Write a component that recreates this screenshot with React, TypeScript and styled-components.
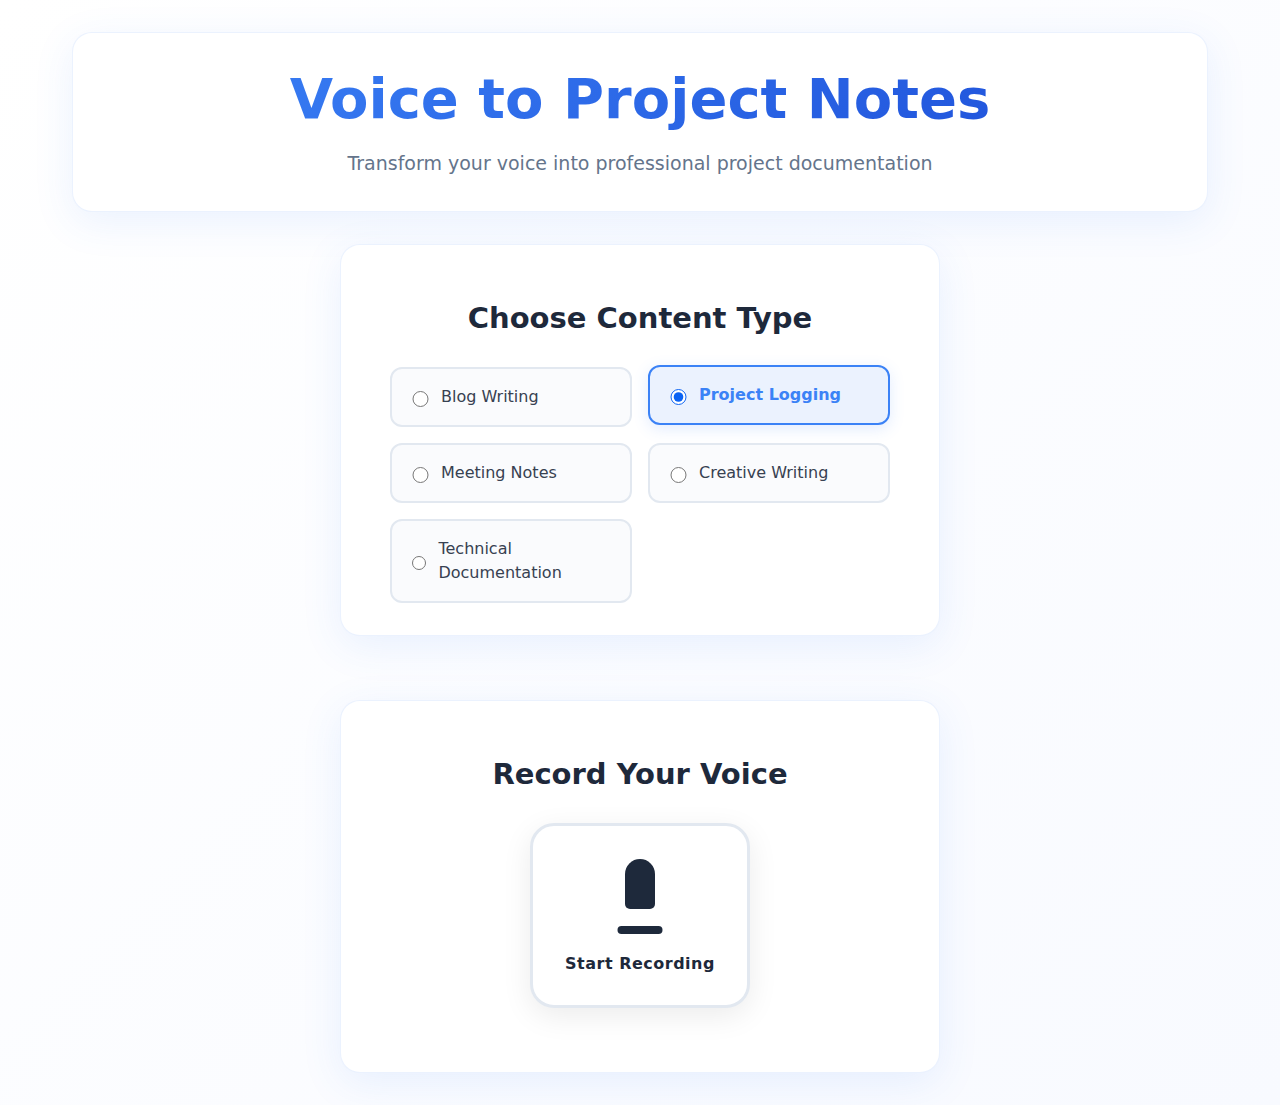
import React, { useState } from 'react';
import styled, { createGlobalStyle } from 'styled-components';

const GlobalStyle = createGlobalStyle`
  *, *::before, *::after { box-sizing: border-box; }
  html { min-height: 100%; }
  body {
    margin: 0;
    min-height: 100vh;
    font-family: "DejaVu Sans", sans-serif;
    font-size: 16px;
    line-height: 24px;
    color: #1e293b;
    background: linear-gradient(135deg, #ffffff 0%, #f8faff 100%);
  }
`;

const Page = styled.div`
  max-width: 1200px;
  margin: 0 auto;
  padding: 32px;
`;

const Card = styled.section`
  background: #ffffff;
  border: 1px solid rgba(59, 130, 246, 0.1);
  border-radius: 20px;
  box-shadow: 0 10px 40px rgba(59, 130, 246, 0.1);
`;

const Header = styled(Card).attrs({ as: 'header' })`
  padding: 32px;
  margin-bottom: 32px;
  text-align: center;
`;

const Title = styled.h1`
  margin: 0 0 16px;
  font-size: 56px;
  line-height: 67px;
  font-weight: 700;
  background: linear-gradient(135deg, #3b82f6 0%, #1d4ed8 100%);
  background-clip: text;
  -webkit-background-clip: text;
  color: transparent;
`;

const Subtitle = styled.p`
  margin: 0;
  font-size: 19px;
  line-height: 31px;
  color: #64748b;
`;

const Main = styled.main`
  display: flex;
  flex-direction: column;
  align-items: center;
  gap: 64px;
`;

const Panel = styled(Card)`
  width: 100%;
  max-width: 600px;
  padding: 48px 48px 32px;
`;

const RecordPanel = styled(Panel)`
  padding-bottom: 64px;
  display: flex;
  flex-direction: column;
  align-items: center;
`;

const PanelTitle = styled.h2`
  margin: 0 0 24px;
  font-size: 29px;
  line-height: 50px;
  font-weight: 600;
  text-align: center;
`;

const Options = styled.div`
  display: grid;
  grid-template-columns: repeat(auto-fit, minmax(200px, 1fr));
  gap: 16px;
  max-width: 500px;
  margin: 0 auto;
`;

const Option = styled.label<{ $selected: boolean }>`
  display: flex;
  align-items: center;
  padding: 16px 20px;
  border: 2px solid ${p => (p.$selected ? '#3b82f6' : '#e2e8f0')};
  border-radius: 12px;
  background: ${p => (p.$selected ? '#ebf2fe' : '#fafbfd')};
  color: ${p => (p.$selected ? '#3b82f6' : '#374151')};
  font-weight: ${p => (p.$selected ? 600 : 400)};
  box-shadow: ${p => (p.$selected ? '0 4px 15px rgba(59, 130, 246, 0.15)' : 'none')};
  transform: ${p => (p.$selected ? 'translateY(-2px)' : 'none')};
  cursor: pointer;
`;

const Radio = styled.input`
  width: 17px;
  height: 16px;
  margin: 4px 12px 0 0;
  accent-color: #0b63f3;
`;

const RecordButton = styled.button`
  display: flex;
  flex-direction: column;
  align-items: center;
  gap: 20px;
  min-width: 220px;
  padding: 32px;
  border: 3px solid #e2e8f0;
  border-radius: 24px;
  background: #ffffff;
  box-shadow: 0 8px 30px rgba(0, 0, 0, 0.08);
  color: #1e293b;
  font: inherit;
  font-weight: 600;
  line-height: 19px;
  letter-spacing: 0.5px;
  cursor: pointer;
`;

const options = ['Blog Writing', 'Project Logging', 'Meeting Notes', 'Creative Writing', 'Technical Documentation'];

export default function App() {
  const [selected, setSelected] = useState('Project Logging');
  return (
    <>
      <GlobalStyle />
      <Page>
        <Header>
          <Title>Voice to Project Notes</Title>
          <Subtitle>Transform your voice into professional project documentation</Subtitle>
        </Header>
        <Main>
          <Panel>
            <PanelTitle>Choose Content Type</PanelTitle>
            <Options role="radiogroup" aria-label="Choose Content Type">
              {options.map(name => (
                <Option key={name} $selected={name === selected}>
                  <Radio
                    type="radio"
                    name="content-type"
                    value={name}
                    checked={name === selected}
                    onChange={() => setSelected(name)}
                  />
                  <span>{name}</span>
                </Option>
              ))}
            </Options>
          </Panel>
          <RecordPanel>
            <PanelTitle>Record Your Voice</PanelTitle>
            <RecordButton type="button">
              <svg width="46" height="76" viewBox="0 0 46 76" fill="currentColor" aria-hidden="true">
                <path d="M8 16a15 15 0 0 1 30 0v30a5 5 0 0 1-5 5H13a5 5 0 0 1-5-5z" />
                <rect x="0.5" y="68" width="45" height="8" rx="4" />
              </svg>
              <span>Start Recording</span>
            </RecordButton>
          </RecordPanel>
        </Main>
      </Page>
    </>
  );
}
